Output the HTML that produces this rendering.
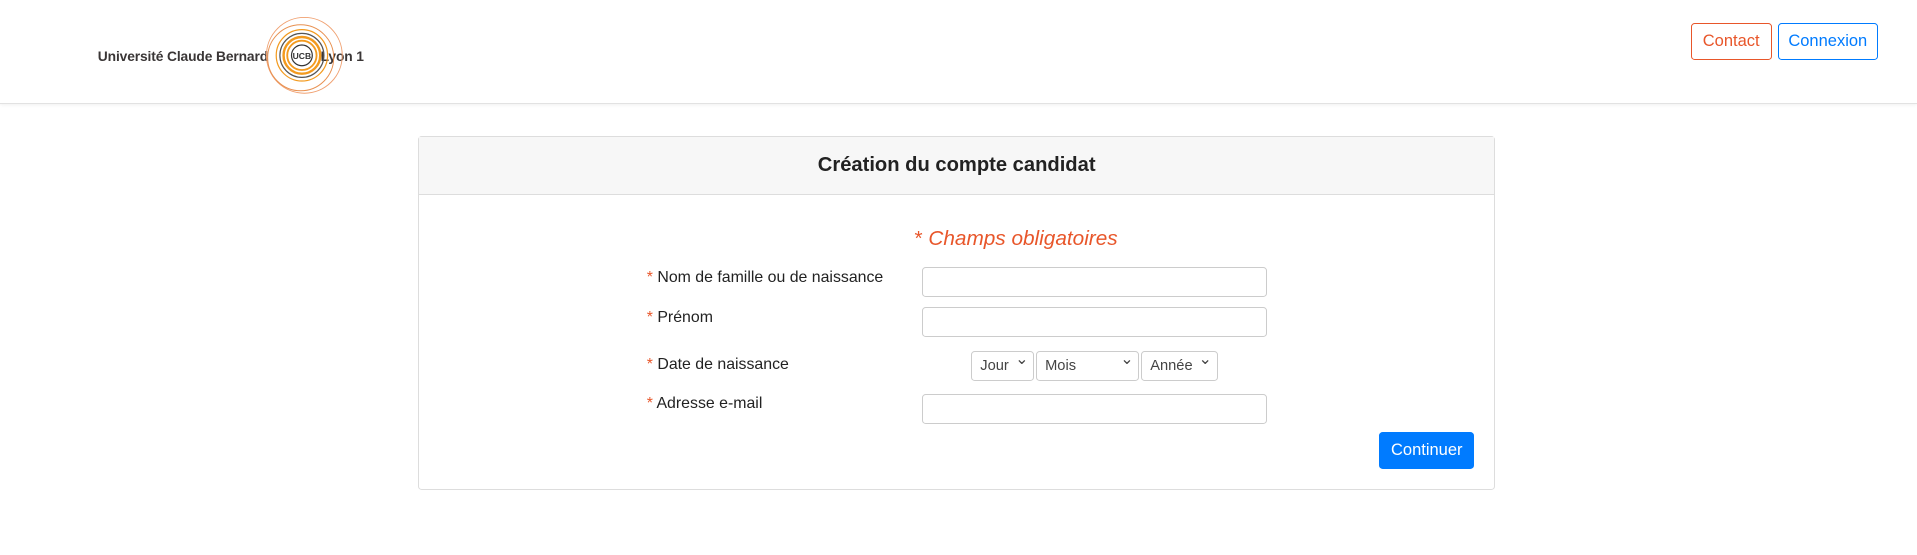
<!DOCTYPE html>
<html><head><meta charset="utf-8"><style>
html,body{margin:0;padding:0;background:#fff;}
body{zoom:1.2226;width:1568px;height:454px;overflow:hidden;font-family:"Liberation Sans",sans-serif;color:#212529;position:relative}
.hdr{position:absolute;left:0;top:0;width:1568px;height:84px;border-bottom:1px solid #e2e2e2;box-shadow:0 1px 3px rgba(0,0,0,.08)}
.abs{position:absolute}
.logo{left:80px;top:39px;font-size:11.3px;font-weight:bold;color:#3a3636;letter-spacing:-.1px}
.btn{position:absolute;top:19px;height:30px;box-sizing:border-box;border-radius:3px;font-size:13.5px;display:flex;align-items:center;justify-content:center;background:#fff}
.card{left:342px;top:111px;width:881px;height:290px;border:1px solid #ddd;border-radius:3px;box-sizing:border-box}
.ch{height:47px;background:#f7f7f7;border-bottom:1px solid #ddd;text-align:center;font-size:16.5px;font-weight:bold;line-height:46px;color:#222}
.lbl{position:absolute;left:529px;font-size:13px;color:#222}
.lbl b{color:#e8562a;font-weight:normal}
.inp{position:absolute;left:754px;width:282px;height:25px;border:1px solid #ccc;border-radius:3px;box-sizing:border-box}
.sel{position:absolute;top:287px;height:25px;border:1px solid #ccc;border-radius:3px;box-sizing:border-box;font-size:12px;color:#444;line-height:23px;padding-left:7px}
.sel:after{content:"⌄";position:absolute;right:4px;top:-5px;font-size:13px}
</style></head><body>
<div class="hdr"></div>
<div class="abs logo">Université Claude Bernard <span style="display:inline-block;width:40px"></span>Lyon 1</div>
<svg class="abs" style="left:216px;top:12px" width="66" height="66" viewBox="0 0 66 66">
<circle cx="33" cy="33" r="31" fill="none" stroke="#f0a070" stroke-width=".8"/>
<circle cx="30" cy="35" r="27" fill="none" stroke="#e89050" stroke-width=".8"/>
<circle cx="31" cy="33" r="21" fill="none" stroke="#f39a1e" stroke-width="1"/>
<circle cx="31" cy="33" r="18" fill="none" stroke="#555" stroke-width="1"/>
<circle cx="31" cy="33" r="15" fill="none" stroke="#f39a1e" stroke-width="2"/>
<circle cx="31" cy="33" r="12" fill="none" stroke="#f39a1e" stroke-width="1.5"/>
<circle cx="31" cy="33" r="8.5" fill="#fff" stroke="#333" stroke-width="1"/>
<text x="31" y="36" font-size="7" font-family="Liberation Sans" font-weight="bold" text-anchor="middle" fill="#333">UCB</text>
</svg>
<div class="btn" style="left:1383px;width:66px;border:1px solid #e8562a;color:#e8562a">Contact</div>
<div class="btn" style="left:1454px;width:82px;border:1px solid #007bff;color:#007bff">Connexion</div>
<div class="abs card"><div class="ch">Création du compte candidat</div></div>
<div class="abs" style="left:748px;top:186px;font-size:17px;font-style:italic;color:#e8562a"><span style="font-style:normal">*</span> Champs obligatoires</div>
<div class="lbl" style="top:220px"><b>*</b> Nom de famille ou de naissance</div>
<div class="lbl" style="top:253px"><b>*</b> Prénom</div>
<div class="lbl" style="top:291px"><b>*</b> Date de naissance</div>
<div class="lbl" style="top:323px"><b>*</b> Adresse e-mail</div>
<div class="inp" style="top:218px"></div>
<div class="inp" style="top:251px"></div>
<div class="inp" style="top:322px"></div>
<div class="sel" style="left:794px;width:52px">Jour</div>
<div class="sel" style="left:847px;width:85px">Mois</div>
<div class="sel" style="left:933px;width:63px">Année</div>
<div class="abs" style="left:1128px;top:353px;width:78px;height:31px;background:#007bff;border-radius:3px;color:#fff;font-size:13.5px;line-height:31px;text-align:center">Continuer</div>
</body></html>
